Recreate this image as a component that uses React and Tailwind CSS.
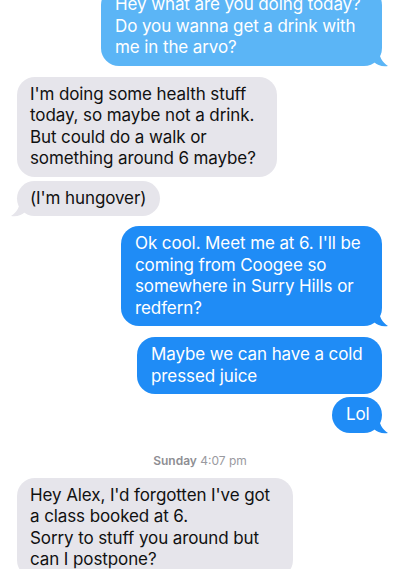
const font = { fontFamily: 'Inter, "Noto Sans", sans-serif' }

function TailRight({ color }) {
  return (
    <svg className="absolute -right-[6px] bottom-[-1px]" width="14" height="18" viewBox="0 0 14 18">
      <path d="M0 0 L5 0 C5 8 8 13 14 17 C8 18 3 16 0 13 Z" fill={color} />
    </svg>
  )
}

function TailLeft({ color }) {
  return (
    <svg className="absolute -left-[6px] bottom-[-1px]" width="14" height="18" viewBox="0 0 14 18">
      <path d="M14 0 L9 0 C9 8 6 13 0 17 C6 18 11 16 14 13 Z" fill={color} />
    </svg>
  )
}

function Sent({ lines, width, className = '', tail, light }) {
  const color = light ? '#5bb5f6' : '#1f8cf6'
  return (
    <div className={`flex justify-end pr-[18px] ${className}`}>
      <div
        className={`relative rounded-[18px] px-[14px] py-[7px] text-white text-[17px] tracking-[-0.1px] leading-[21.5px] ${light ? 'bg-[#5bb5f6]' : 'bg-[#1f8cf6]'}`}
        style={{ width }}
      >
        {lines.map((l, i) => (
          <div key={i} className="whitespace-nowrap">{l}</div>
        ))}
        {tail && <TailRight color={color} />}
      </div>
    </div>
  )
}

function Received({ lines, width, className = '', tail }) {
  return (
    <div className={`flex justify-start pl-[17px] ${className}`}>
      <div
        className="relative rounded-[18px] px-[13px] py-[7px] bg-[#e6e5eb] text-[#111111] text-[17px] tracking-[-0.1px] leading-[21.5px]"
        style={{ width }}
      >
        {lines.map((l, i) => (
          <div key={i} className="whitespace-nowrap">{l}</div>
        ))}
        {tail && <TailLeft color="#e6e5eb" />}
      </div>
    </div>
  )
}

export default function App() {
  return (
    <div className="w-[400px] h-[569px] overflow-hidden bg-white flex flex-col" style={font}>
      <Sent
        light
        tail
        width={281}
        className="-mt-[13px]"
        lines={['Hey what are you doing today?', 'Do you wanna get a drink with', 'me in the arvo?']}
      />
      <Received
        width={260}
        className="mt-[11px]"
        lines={["I'm doing some health stuff", 'today, so maybe not a drink.', 'But could do a walk or', 'something around 6 maybe?']}
      />
      <Received tail width={143} className="mt-[4px]" lines={["(I'm hungover)"]} />
      <Sent
        tail
        width={261}
        className="mt-[10px]"
        lines={["Ok cool. Meet me at 6. I'll be", 'coming from Coogee so', 'somewhere in Surry Hills or', 'redfern?']}
      />
      <Sent width={245} className="mt-[11px]" lines={['Maybe we can have a cold', 'pressed juice']} />
      <Sent tail width={50} className="mt-[3px]" lines={['Lol']} />
      <div className="mt-[21px] text-center text-[12px] leading-[14px] text-[#8e8e93]">
        <span className="font-semibold">Sunday</span> <span className="text-[#9a9aa0]">4:07 pm</span>
      </div>
      <Received
        width={276}
        className="mt-[10px]"
        lines={["Hey Alex, I'd forgotten I've got", 'a class booked at 6.', 'Sorry to stuff you around but', 'can I postpone?']}
      />
    </div>
  )
}
